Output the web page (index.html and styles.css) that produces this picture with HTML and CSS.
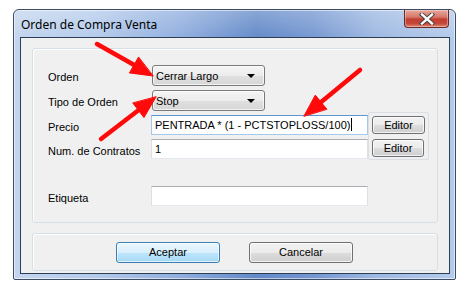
FILE: index.html
```html
<!DOCTYPE html>
<html>
<head>
<meta charset="utf-8">
<link rel="stylesheet" href="styles.css">
</head>
<body>
<div class="window">
  <div class="titlebar">
    <span class="title">Orden de Compra Venta</span>
    <div class="close">
      <svg width="16" height="12" viewBox="0 0 16 12"><path d="M3 1.5 L13 10.5 M13 1.5 L3 10.5" stroke="#3a3a3a" stroke-width="4.2" stroke-linecap="square"/><path d="M3 1.5 L13 10.5 M13 1.5 L3 10.5" stroke="#ffffff" stroke-width="2.4" stroke-linecap="square"/></svg>
    </div>
  </div>
  <div class="client">
    <div class="group form">
      <div class="lbl r1">Orden</div>
      <div class="combo r1">Cerrar Largo<span class="caret"></span></div>
      <div class="lbl r2">Tipo de Orden</div>
      <div class="combo r2">Stop<span class="caret"></span></div>
      <div class="lbl r3">Precio</div>
      <div class="input focus r3">PENTRADA * (1 - PCTSTOPLOSS/100)<span class="cursor"></span></div>
      <div class="lbl r4">Num. de Contratos</div>
      <div class="input r4">1</div>
      <div class="panel">
        <div class="btn small">Editor</div>
        <div class="btn small second">Editor</div>
      </div>
      <div class="lbl r5">Etiqueta</div>
      <div class="input r5"></div>
    </div>
    <div class="group actions">
      <div class="btn wide default">Aceptar</div>
      <div class="btn wide">Cancelar</div>
    </div>
  </div>
</div>
<svg class="arrows" width="466" height="288" viewBox="0 0 466 288">
  <g fill="#ff0a0a" stroke="#ff0a0a" stroke-linecap="round">
    <line x1="97" y1="44" x2="136" y2="66" stroke-width="4.5"/>
    <polygon points="153,76 129.4,72.9 138.4,57.3" stroke-width="1"/>
    <line x1="101" y1="139" x2="140" y2="109" stroke-width="4.5"/>
    <polygon points="156,97 143.96,117.6 133.0,103.2" stroke-width="1"/>
    <line x1="360" y1="70" x2="320" y2="103" stroke-width="4.5"/>
    <polygon points="304,116 315.3,95.1 326.7,109.0" stroke-width="1"/>
  </g>
</svg>
</body>
</html>
```
FILE: styles.css
```css
html, body {
  margin: 0;
  padding: 0;
  background: #ffffff;
}
body {
  padding: 9px 0 0 13px;
  width: 466px;
  height: 288px;
  box-sizing: border-box;
  position: relative;
  overflow: hidden;
  font-family: "Liberation Sans", Arial, sans-serif;
  font-size: 11px;
  color: #000;
}
.window {
  width: 443px;
  height: 271px;
  box-sizing: border-box;
  border: 1px solid #3c4d63;
  border-radius: 6px 6px 2px 2px;
  background:
    linear-gradient(180deg, rgba(255,255,255,0.25) 0px, rgba(255,255,255,0) 30px),
    linear-gradient(90deg, #c3d5ee 0%, #b4cbeb 18%, #8fadde 38%, #6289c8 55%, #7597d1 68%, #9db8e2 82%, #b5cbeb 100%);
  box-shadow: inset 0 0 0 1px rgba(255,255,255,0.55);
  display: flex;
  flex-direction: column;
}
.titlebar {
  height: 27px;
  display: flex;
  justify-content: space-between;
  align-items: flex-start;
  padding-left: 7px;
}
.title {
  font-family: "Noto Sans", "Liberation Sans", sans-serif;
  font-size: 12px;
  line-height: 16px;
  padding-top: 7px;
  color: #000;
}
.close {
  width: 45px;
  height: 18px;
  margin-right: 6px;
  box-sizing: border-box;
  border: 1px solid #6a2a25;
  border-top: none;
  border-radius: 0 0 4px 4px;
  background: linear-gradient(180deg, #e7a79d 0%, #d77a6c 40%, #c23d30 55%, #c6483a 80%, #de8a73 100%);
  box-shadow: inset 0 0 0 1px rgba(255,255,255,0.35);
  display: flex;
  align-items: center;
  justify-content: center;
}
.client {
  margin: 0 5px 0 6px;
  height: 237px;
  box-sizing: border-box;
  border: 1px solid #2c3e55;
  background: #f0f0f0;
  display: flex;
  flex-direction: column;
  padding: 10px 11px 0 11px;
  gap: 10px;
}
.group {
  box-sizing: border-box;
  border: 1px solid #d5dfe5;
  border-radius: 3px;
  box-shadow: inset 1px 1px 0 #ffffff;
}
.form {
  height: 175px;
  padding: 16px 0 0 15px;
  display: grid;
  grid-template-columns: 103px 217px 61px;
  grid-template-rows: 21px 21px 20px 20px 43px;
  row-gap: 4px;
}
.r1 { grid-row: 1; }
.r2 { grid-row: 2; }
.r3 { grid-row: 3; }
.r4 { grid-row: 4; }
.r5 { grid-row: 5; align-self: end; height: 20px; }
.lbl {
  grid-column: 1;
  padding-top: 6px;
  line-height: 13px;
  white-space: nowrap;
  box-sizing: border-box;
}
.combo {
  grid-column: 2;
  width: 113px;
  margin-left: 1px;
  box-sizing: border-box;
  border: 1px solid #7a7a7a;
  border-radius: 3px;
  background: linear-gradient(180deg, #f4f4f4 0%, #ececec 50%, #e0e0e0 51%, #d6d6d6 100%);
  box-shadow: inset 0 0 0 1px rgba(255,255,255,0.7);
  padding-left: 3px;
  padding-top: 1px;
  line-height: 18px;
  position: relative;
}
.caret {
  position: absolute;
  right: 9px;
  top: 8px;
  width: 0;
  height: 0;
  border-left: 4px solid transparent;
  border-right: 4px solid transparent;
  border-top: 4px solid #000;
}
.input {
  grid-column: 2;
  width: 217px;
  height: 20px;
  box-sizing: border-box;
  background: #ffffff;
  border: 1px solid #e3e9ef;
  border-top-color: #abadb3;
  border-left-color: #dbdfe6;
  border-right-color: #dbdfe6;
  padding-left: 3px;
  line-height: 18px;
  white-space: nowrap;
}
.input.focus {
  border-color: #a4c9ec;
  border-top-color: #5b95d3;
}
.cursor {
  display: inline-block;
  width: 1px;
  height: 13px;
  background: #000;
  vertical-align: -2px;
  margin-left: 1px;
}
.panel {
  grid-column: 3;
  grid-row: 3 / 5;
  margin: -3px 0 -1px 0;
  box-sizing: border-box;
  border: 1px solid #d9dfe4;
  border-radius: 2px;
  padding: 3px 0 0 3px;
  display: flex;
  flex-direction: column;
}
.btn {
  box-sizing: border-box;
  border: 1px solid #707070;
  border-radius: 3px;
  background: linear-gradient(180deg, #f2f2f2 0%, #ebebeb 50%, #dddddd 51%, #cfcfcf 100%);
  box-shadow: inset 0 0 0 1px rgba(255,255,255,0.75);
  text-align: center;
  color: #000;
}
.small {
  width: 53px;
  height: 18px;
  line-height: 16px;
}
.small.second {
  margin-top: 5px;
  width: 52px;
}
.actions {
  height: 38px;
  padding: 8px 0 0 83px;
  display: flex;
  gap: 29px;
}
.wide {
  width: 104px;
  height: 21px;
  line-height: 19px;
}
.btn.default {
  border-color: #3c7fb1;
  background: linear-gradient(180deg, #eaf6fd 0%, #d9f0fc 50%, #bee6fd 51%, #a7d9f5 100%);
  box-shadow: inset 0 0 0 1px rgba(255,255,255,0.6);
}
.arrows {
  position: absolute;
  left: 0;
  top: 0;
  pointer-events: none;
}
```
